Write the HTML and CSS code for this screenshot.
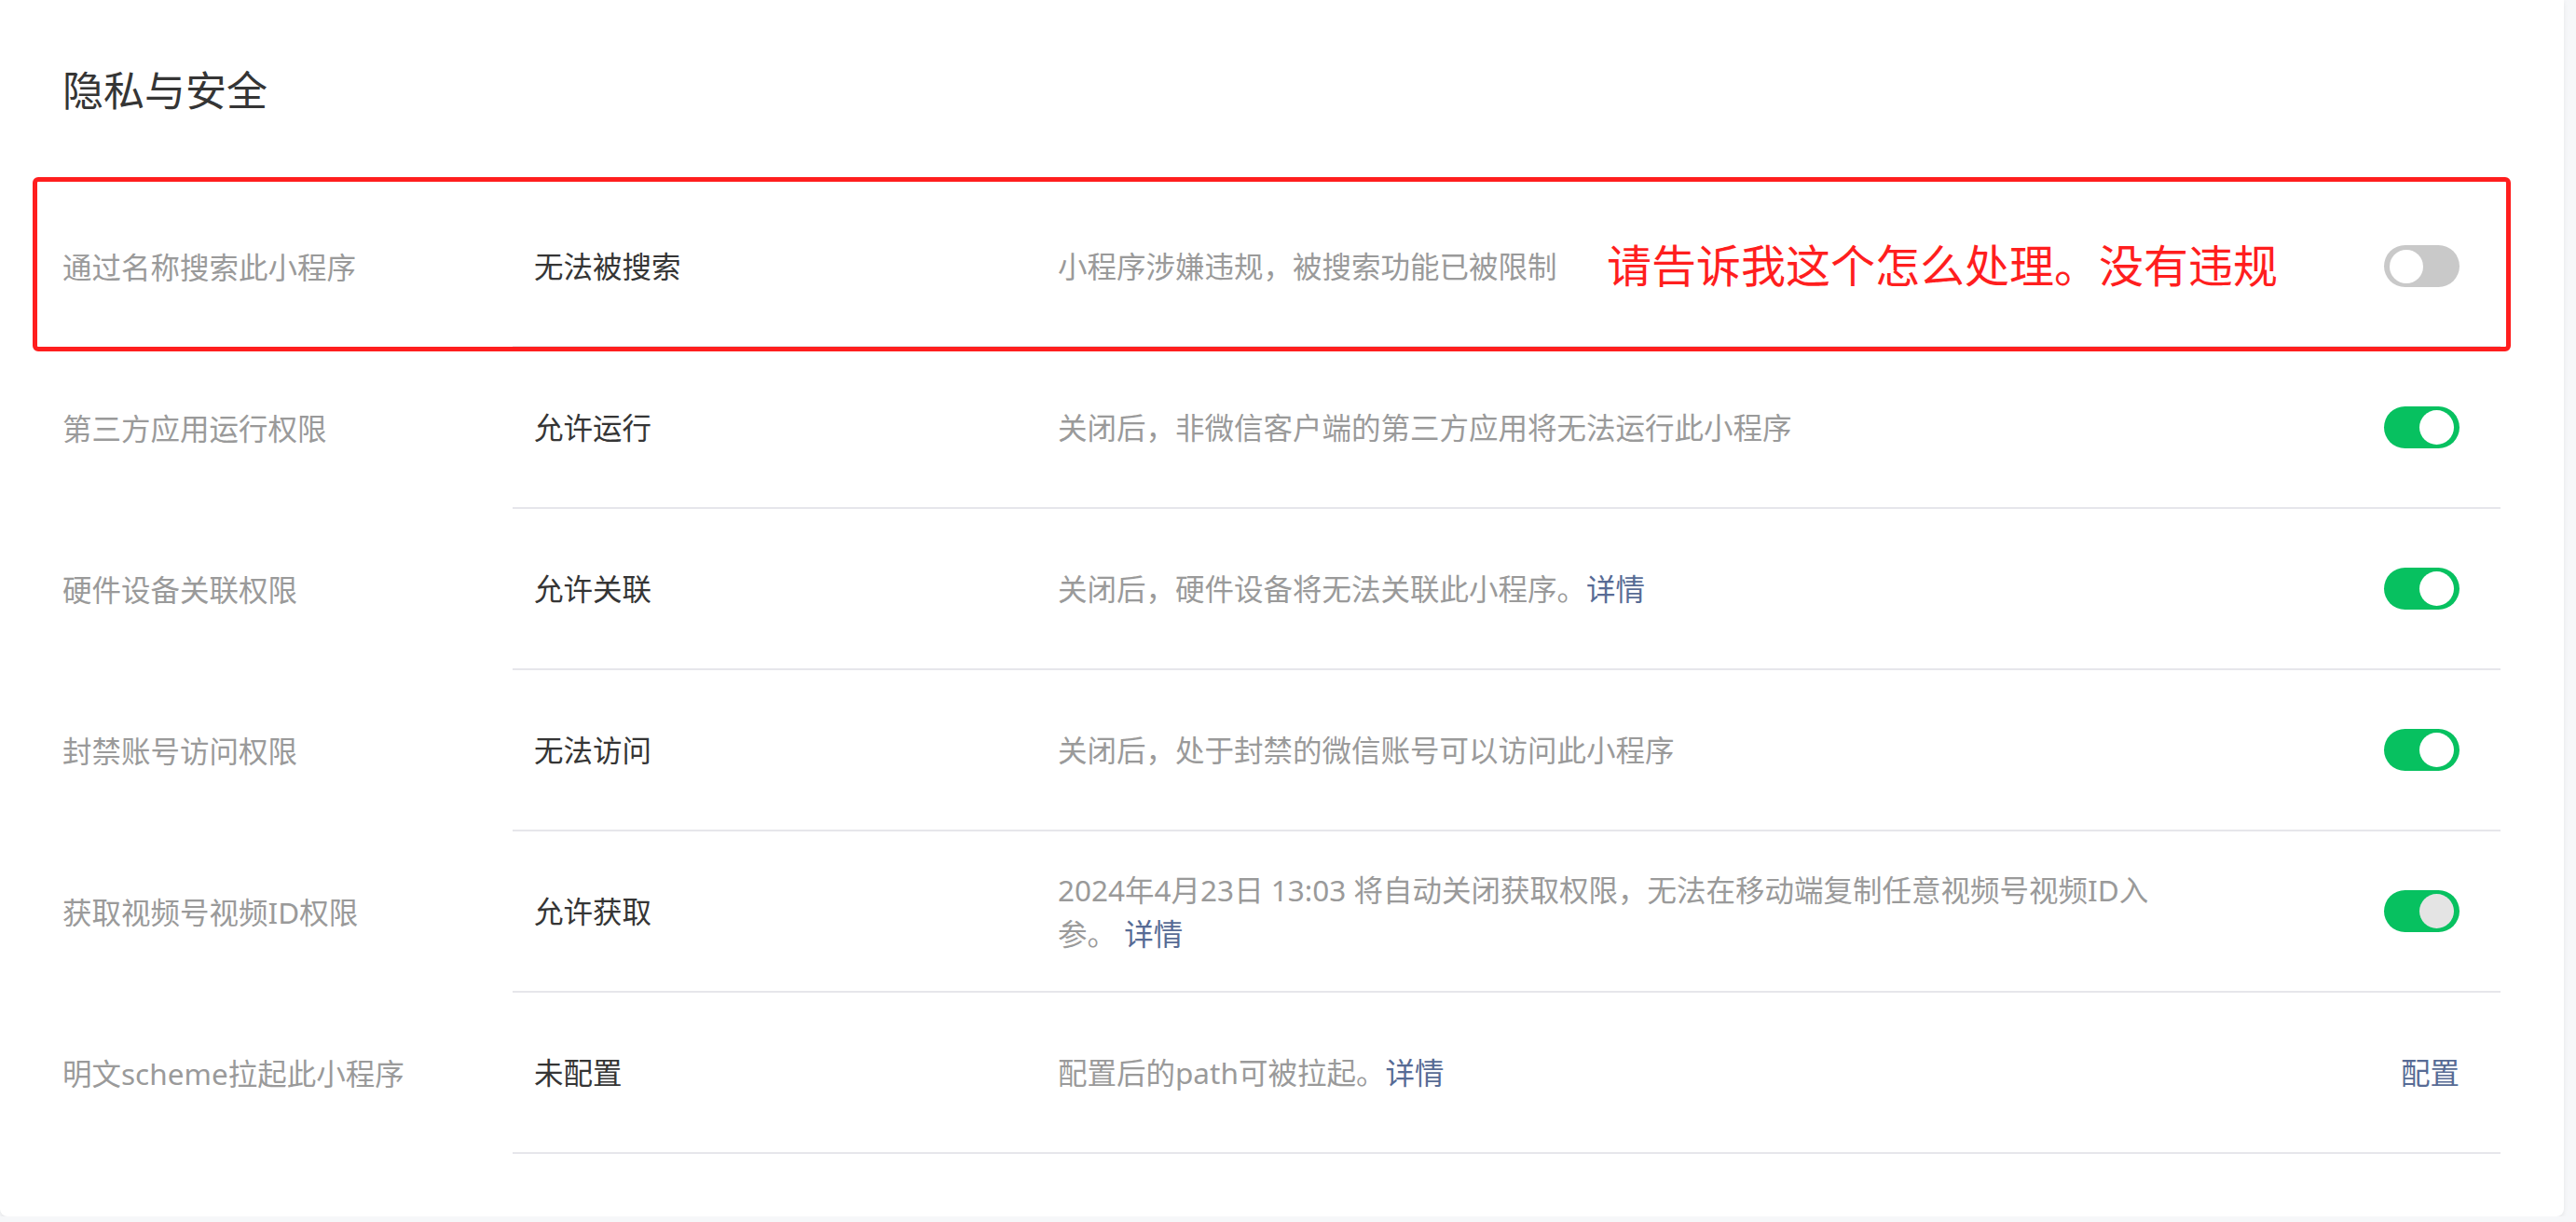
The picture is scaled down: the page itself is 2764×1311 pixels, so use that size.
FILE: index.html
```html
<!DOCTYPE html>
<html lang="zh-CN">
<head>
    <meta charset="UTF-8">
    <title>隐私与安全</title>
    <link rel="stylesheet" href="styles.css">
</head>
<body>
 <div class="card">
  <h2 class="title">隐私与安全</h2>

  <div class="list">
   <div class="row row-marked">
    <div class="label">通过名称搜索此小程序</div>
    <div class="main">
     <div class="value">无法被搜索</div>
     <div class="desc">小程序涉嫌违规，被搜索功能已被限制</div>
     <span class="switch"></span>
    </div>
    <div class="mark"></div>
    <div class="mark-text">请告诉我这个怎么处理。没有违规</div>
   </div>

   <div class="row">
    <div class="label">第三方应用运行权限</div>
    <div class="main">
     <div class="value">允许运行</div>
     <div class="desc">关闭后，非微信客户端的第三方应用将无法运行此小程序</div>
     <span class="switch on"></span>
    </div>
   </div>

   <div class="row">
    <div class="label">硬件设备关联权限</div>
    <div class="main">
     <div class="value">允许关联</div>
     <div class="desc">关闭后，硬件设备将无法关联此小程序。<a href="#" class="link">详情</a></div>
     <span class="switch on"></span>
    </div>
   </div>

   <div class="row">
    <div class="label">封禁账号访问权限</div>
    <div class="main">
     <div class="value">无法访问</div>
     <div class="desc">关闭后，处于封禁的微信账号可以访问此小程序</div>
     <span class="switch on"></span>
    </div>
   </div>

   <div class="row">
    <div class="label">获取视频号视频ID权限</div>
    <div class="main">
     <div class="value">允许获取</div>
     <div class="desc">2024年4月23日 13:03 将自动关闭获取权限，无法在移动端复制任意视频号视频ID入<span>参。</span> <a href="#" class="link">详情</a></div>
     <span class="switch on pending"></span>
    </div>
   </div>

   <div class="row">
    <div class="label">明文scheme拉起此小程序</div>
    <div class="main">
     <div class="value">未配置</div>
     <div class="desc">配置后的path可被拉起。<a href="#" class="link">详情</a></div>
     <a href="#" class="link action">配置</a>
    </div>
   </div>
  </div>
 </div>
</body>
</html>
```

FILE: styles.css
```css
body {
    margin: 0;
    background-color: #f6f7f9;
    font-family: "Noto Sans", "Noto Sans CJK SC", sans-serif;
    color: #353535;
}

.card {
    width: 2751px;
    box-sizing: border-box;
    padding: 67px 68px 67px 67px;
    background-color: #fff;
    border-radius: 0 0 8px 8px;
    box-shadow: 0 2px 4px rgba(0, 0, 0, 0.08);
}

.title {
    margin: 0 0 73px 0;
    font-size: 44px;
    font-weight: normal;
    line-height: 60px;
    color: #353535;
}

.row {
    display: flex;
    font-size: 31.5px;
    line-height: 47px;
}
.row-marked { position: relative; }

.label {
    width: 483px;
    flex-shrink: 0;
    display: flex;
    align-items: center;
    color: #9a9a9a;
}

.main {
    flex: 1;
    height: 171px;
    display: flex;
    align-items: center;
    padding: 0 44px 0 23px;
    border-bottom: 2px solid #e6e6eb;
}

.value {
    width: 562px;
    flex-shrink: 0;
    color: #353535;
}

.desc {
    flex: 1;
    max-width: 1195px;
    color: #9a9a9a;
}

.link {
    color: #576b95;
    text-decoration: none;
}
.action { margin-left: auto; }

.switch {
    margin-left: auto;
    position: relative;
    width: 81px;
    height: 45px;
    border-radius: 23px;
    background-color: #c9c9c9;
    flex-shrink: 0;
}
.switch::after {
    content: "";
    position: absolute;
    top: 5px;
    left: 6px;
    width: 36px;
    height: 36px;
    border-radius: 50%;
    background-color: #fff;
}
.switch.on { background-color: #07c160; }
.switch.on::after {
    top: 4px;
    left: auto;
    right: 6px;
    width: 37px;
    height: 37px;
}
.switch.pending::after { background-color: #e4e4e4; }

/* annotation drawn over the first row */
.mark {
    position: absolute;
    top: -10px;
    left: -32px;
    right: -11px;
    bottom: -4px;
    border: 5px solid #ff1e1e;
    border-radius: 6px;
}
.mark-text {
    position: absolute;
    top: 55px;
    left: 1657px;
    font-size: 48px;
    line-height: 60px;
    color: #ff1e1e;
    white-space: nowrap;
}
```
